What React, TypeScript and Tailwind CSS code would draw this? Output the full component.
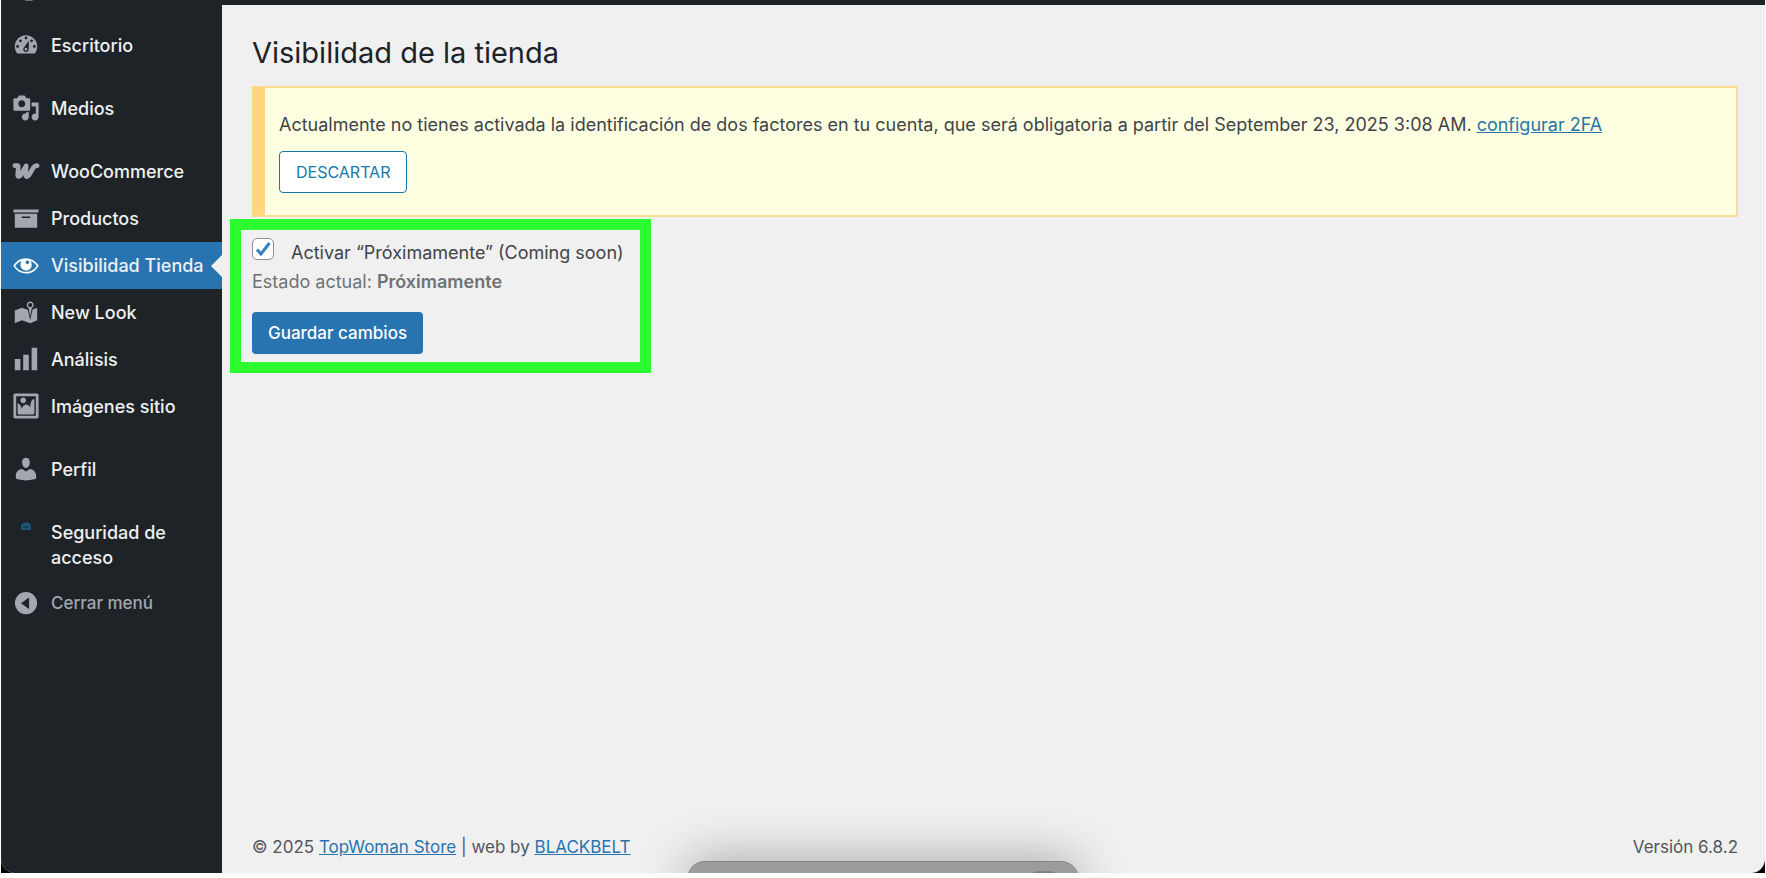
import type { ReactNode } from "react";

const icons = {
  dashboard:
    "M3.76 16h12.48c1.1-1.37 1.76-3.11 1.76-5 0-4.42-3.58-8-8-8s-8 3.58-8 8c0 1.89.66 3.63 1.76 5zM10 4c.55 0 1 .45 1 1s-.45 1-1 1-1-.45-1-1 .45-1 1-1zM6 6c.55 0 1 .45 1 1s-.45 1-1 1-1-.45-1-1 .45-1 1-1zm8 0c.55 0 1 .45 1 1s-.45 1-1 1-1-.45-1-1 .45-1 1-1zm-5.37 5.55L12 7v6c0 1.1-.9 2-2 2s-2-.9-2-2c0-.57.24-1.08.63-1.45zM4 10c.55 0 1 .45 1 1s-.45 1-1 1-1-.45-1-1 .45-1 1-1zm12 0c.55 0 1 .45 1 1s-.45 1-1 1-1-.45-1-1 .45-1 1-1zm-5 3c0-.55-.45-1-1-1s-1 .45-1 1 .45 1 1 1 1-.45 1-1z",
  media:
    "M13 11V4c0-.55-.45-1-1-1h-1.67L9 1H5L3.67 3H2c-.55 0-1 .45-1 1v7c0 .55.45 1 1 1h10c.55 0 1-.45 1-1zM7 4.5c1.38 0 2.5 1.12 2.5 2.5S8.38 9.5 7 9.5 4.5 8.38 4.5 7 5.62 4.5 7 4.5zM14 6h5v10.5c0 1.38-1.12 2.5-2.5 2.5S14 17.88 14 16.5s1.12-2.5 2.5-2.5c.17 0 .34.02.5.05V9h-3V6zm-4 8.05V13h2v3.5c0 1.38-1.12 2.5-2.5 2.5S7 17.88 7 16.5 8.12 14 9.5 14c.17 0 .34.02.5.05z",
  archive: "M19 4v2H1V4h18zM2 7h16v10H2V7zm11 3V9H7v1h6z",
  visibility:
    "M18.3 9.5C15 4.9 8.5 3.8 3.9 7.2c-1.2.9-2.2 2.1-3 3.4.2.4.5.8.8 1.2 3.3 4.6 9.6 5.6 14.2 2.4.9-.7 1.7-1.4 2.4-2.4.3-.4.5-.8.8-1.2-.3-.4-.5-.8-.8-1.1zm-8.2-2.3c.5-.5 1.3-.5 1.8 0s.5 1.3 0 1.8-1.3.5-1.8 0-.5-1.3 0-1.8zm-.1 7.7c-3.1 0-6-1.6-7.7-4.2C3.5 9 5.1 7.8 7 7.2c-.7.8-1 1.7-1 2.7 0 2.2 1.7 4.1 4 4.1 2.2 0 4.1-1.7 4.1-4v-.1c0-1-.4-2-1.1-2.7 1.9.6 3.5 1.8 4.7 3.5-1.7 2.6-4.6 4.2-7.7 4.2z",
  location:
    "M13 13.14l1.17-5.94c.79-.43 1.33-1.25 1.33-2.2 0-1.38-1.12-2.5-2.5-2.5S10.5 3.62 10.5 5c0 .95.54 1.77 1.33 2.2zm0-9.64c.83 0 1.5.67 1.5 1.5s-.67 1.5-1.5 1.5-1.5-.67-1.5-1.5.67-1.5 1.5-1.5zm1.72 4.8L18 6.97v9L13.12 18 7 15.97l-5 2v-9l5-2 4.27 1.41 1.73 7.3z",
  chart: "M18 18V2h-4v16h4zm-6 0V7H8v11h4zm-6 0v-8H2v8h4z",
  image:
    "M2.25 1h15.5c.69 0 1.25.56 1.25 1.25v15.5c0 .69-.56 1.25-1.25 1.25H2.25C1.56 19 1 18.44 1 17.75V2.25C1 1.56 1.56 1 2.25 1zM17 17V3H3v14h14zM10 6c0-1.1-.9-2-2-2s-2 .9-2 2 .9 2 2 2 2-.9 2-2zm3 5s0-6 3-6v10c0 .55-.45 1-1 1H5c-.55 0-1-.45-1-1V8c2 0 3 4 3 4s1-3 3-3 3 2 3 2z",
  user: "M10 9.25c-2.27 0-2.73-3.44-2.73-3.44C7 4.02 7.82 2 9.97 2c2.16 0 2.98 2.02 2.71 3.81 0 0-.41 3.44-2.68 3.44zm0 2.57L12.72 10c2.39 0 4.52 2.33 4.52 4.53v2.49s-3.65 1.13-7.24 1.13c-3.65 0-7.24-1.13-7.24-1.13v-2.49c0-2.25 1.94-4.48 4.47-4.48z",
  collapse:
    "M10 2.2a7.9 7.9 0 1 0 0 15.8 7.9 7.9 0 0 0 0-15.8zM12.2 6v8.2L6.4 10.1z",
};

function Icon({ d }: { d: string }) {
  return (
    <svg viewBox="0 0 20 20" className="size-7 shrink-0" fill="currentColor" fillRule="evenodd" aria-hidden="true">
      <path d={d} />
    </svg>
  );
}

function WooIcon() {
  return (
    <svg
      viewBox="0 0 28 28"
      className="size-7 shrink-0"
      fill="none"
      stroke="currentColor"
      strokeWidth="4.6"
      strokeLinecap="round"
      strokeLinejoin="round"
      aria-hidden="true"
    >
      <path d="M2.8 8.6H5.5C6.6 8.6 6.3 10 6.1 12L5.7 17.5C5.6 20 7.5 20.2 8.8 17.8L14.2 8.8L13.6 17.2C13.5 20.2 15.6 20.4 17 18L21.5 10.5Q22.8 8.5 25.2 8.6" />
    </svg>
  );
}

function AccessIcon() {
  return (
    <svg viewBox="0 0 28 28" className="size-7 shrink-0" aria-hidden="true">
      <path d="M9 6.500l2-1 1-1h4l1 1 2 1V12H9z" fill="#1b5675" />
      <path d="M11 9h6M14 7.500v3" stroke="#12374d" strokeWidth="1" />
    </svg>
  );
}

interface MenuItemProps {
  icon: ReactNode;
  label: string;
  active?: boolean;
}

function MenuItem({ icon, label, active }: MenuItemProps) {
  return (
    <li className={active ? "relative bg-[#2874b1] text-white" : "text-[#a2a7ad]"}>
      <a
        href="#"
        aria-current={active ? "page" : undefined}
        className="flex items-start gap-[11px] py-[11px] pl-[11px] text-lg/[25px] font-medium"
      >
        <span className="-my-0.5 shrink-0">{icon}</span>
        <span className="text-[#f0f0f1]">{label}</span>
      </a>
      {active && (
        <span className="absolute top-1/2 right-0 -translate-y-1/2 border-y-[11px] border-r-[11px] border-y-transparent border-r-[#f0f0f0]" />
      )}
    </li>
  );
}

function Sidebar() {
  return (
    <nav aria-label="Menú principal" className="w-[221px] shrink-0 bg-[#1e2328] pt-[17px]">
      <ul>
        <MenuItem icon={<Icon d={icons.dashboard} />} label="Escritorio" />
        <li className="h-4" />
        <MenuItem icon={<Icon d={icons.media} />} label="Medios" />
        <li className="h-4" />
        <MenuItem icon={<WooIcon />} label="WooCommerce" />
        <MenuItem icon={<Icon d={icons.archive} />} label="Productos" />
        <MenuItem icon={<Icon d={icons.visibility} />} label="Visibilidad Tienda" active />
        <MenuItem icon={<Icon d={icons.location} />} label="New Look" />
        <MenuItem icon={<Icon d={icons.chart} />} label="Análisis" />
        <MenuItem icon={<Icon d={icons.image} />} label="Imágenes sitio" />
        <li className="h-4" />
        <MenuItem icon={<Icon d={icons.user} />} label="Perfil" />
        <li className="h-4" />
        <MenuItem icon={<AccessIcon />} label="Seguridad de acceso" />
        <li>
          <button
            type="button"
            className="flex items-center gap-[11px] py-2 pl-[11px] text-[17px]/[28px] font-medium text-[#a2a7ad]"
          >
            <Icon d={icons.collapse} />
            Cerrar menú
          </button>
        </li>
      </ul>
    </nav>
  );
}

function Notice() {
  return (
    <div className="mt-[13px] border-2 border-l-[13px] border-[#fbdc94] border-l-[#fed580] bg-[#feffe1] px-[14px] pt-6 pb-[22px]">
      <p>
        Actualmente no tienes activada la identificación de dos factores en tu cuenta, que será obligatoria a partir
        del September 23, 2025 3:08 AM.{" "}
        <a href="#" className="text-[#2874a8] underline">
          configurar 2FA
        </a>
      </p>
      <button
        type="button"
        className="mt-[14px] h-[42px] rounded border border-[#1679a8] bg-white px-4 text-base text-[#1679a8]"
      >
        DESCARTAR
      </button>
    </div>
  );
}

function VisibilityForm() {
  return (
    <form className="relative mt-5">
      <div className="flex gap-[17px]">
        <span className="relative mt-px size-[22px]">
          <input
            id="coming-soon"
            type="checkbox"
            defaultChecked
            className="peer block size-[22px] appearance-none rounded-[5px] border border-[#8c8f94] bg-white"
          />
          <svg
            viewBox="0 0 22 22"
            className="pointer-events-none absolute inset-0 hidden peer-checked:block"
            fill="none"
            stroke="#3582c4"
            strokeWidth="3"
            aria-hidden="true"
          >
            <path d="M5 11.500l4 4.500 8.500-11" />
          </svg>
        </span>
        <label htmlFor="coming-soon" className="mt-[3px]">
          Activar “Próximamente” (Coming soon)
        </label>
      </div>
      <p className="mt-1 text-[#6f7276]">
        Estado actual: <strong className="font-semibold">Próximamente</strong>
      </p>
      <button
        type="submit"
        className="mt-[18px] h-[42px] rounded bg-[#2874b1] px-4 text-[17px]/[25px] font-medium text-white"
      >
        Guardar cambios
      </button>
      <div className="pointer-events-none absolute -top-[18px] -left-[22px] h-[154px] w-[421px] border-[11px] border-[#2afc30]" />
    </form>
  );
}

function Footer() {
  return (
    <footer className="mt-auto flex justify-between pb-[13px] text-[17px]/[25px] text-[#50565b]">
      <p>
        © 2025{" "}
        <a href="#" className="text-[#2874b1] underline">
          TopWoman Store
        </a>{" "}
        | web by{" "}
        <a href="#" className="text-[#2874b1] underline">
          BLACKBELT
        </a>
      </p>
      <p>Versión 6.8.2</p>
    </footer>
  );
}

export default function App() {
  return (
    <div className="flex h-screen flex-col bg-white px-px pb-[5px] font-['Inter','Liberation_Sans',sans-serif] text-lg/[25px] text-[#3f4449]">
      <div className="flex min-h-0 grow bg-black">
        <div className="relative flex grow flex-col overflow-hidden rounded-b-[14px] bg-[#f0f0f0]">
          <div className="relative h-[5px] shrink-0 bg-[#1e2328]">
            <span className="absolute top-0 left-6 h-px w-2 rounded-b bg-[#6d7277]" />
          </div>
          <div className="flex grow">
            <Sidebar />
            <main className="flex grow flex-col pr-[27px] pl-[30px]">
              <h1 className="pt-7 text-[29px]/[40px] text-[#1d2327]">Visibilidad de la tienda</h1>
              <Notice />
              <VisibilityForm />
              <Footer />
            </main>
          </div>
          <div className="absolute -bottom-8 left-[686px] h-[44px] w-[392px] overflow-hidden rounded-[18px] border border-[#858585] bg-[#9c9c9e] shadow-[0_0_50px_rgba(0,0,0,0.35)]">
            <span className="absolute top-[9px] right-[14px] h-8 w-10 rounded-full bg-[#7f8082]" />
          </div>
        </div>
      </div>
    </div>
  );
}
